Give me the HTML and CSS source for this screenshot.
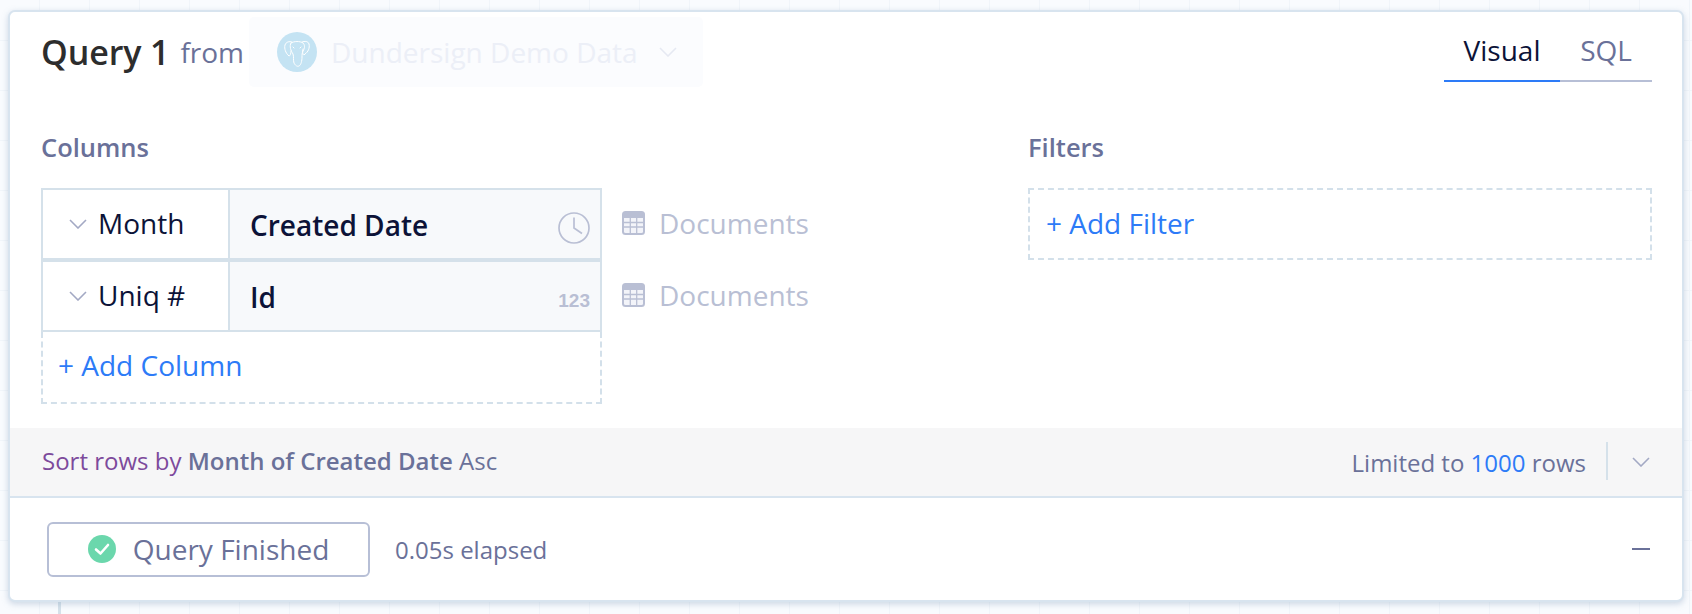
FILE: index.html
```html
<!DOCTYPE html>
<html lang="en">
<head>
<meta charset="utf-8">
<title>Query 1</title>
<link rel="stylesheet" href="styles.css">
</head>
<body>
<section class="card">
  <header class="head">
    <h1 class="title">Query 1</h1>
    <span class="from">from</span>
    <div class="source-select">
      <span class="db-icon">
        <svg viewBox="0 0 40 40" width="40" height="40" fill="none" stroke="#fff" stroke-width="1" stroke-linecap="round" stroke-linejoin="round">
          <path d="M15 10c-3-1-6 0-7 3-1 4 1 8 3 10l1 1c1 0 2-2 2-5"/>
          <path d="M25 10c3-1 6-1 7 2 1 4-1 8-4 10l-1 1c-1 0-2-3-1-6"/>
          <path d="M14 11c3-2 9-2 12 0 2 2 2 5 0 8-1 2-1 4-1 6 0 4-1 8-3 9-2 1-4-1-5-3-1-3 0-6-1-9-2-3-4-8-2-11z"/>
          <path d="M16 15l1 1M24 15l-1 1"/>
        </svg>
      </span>
      <span class="source-name">Dundersign Demo Data</span>
      <svg class="chev-faint" viewBox="0 0 18 10" width="18" height="10"><path d="M1 1l8 8 8-8" fill="none" stroke="#e6e9f2" stroke-width="1.6"/></svg>
    </div>
    <nav class="tabs">
      <a class="tab tab-on">Visual</a>
      <a class="tab">SQL</a>
    </nav>
  </header>

  <div class="builder">
    <div class="columns">
      <h2 class="label">Columns</h2>
      <div class="row">
        <div class="cells">
          <div class="agg">
            <svg class="chev" viewBox="0 0 18 10" width="18" height="10"><path d="M1 1l8 8 8-8" fill="none" stroke="#a3a9c4" stroke-width="1.6"/></svg>
            <span>Month</span>
          </div>
          <div class="field">
            <b>Created Date</b>
            <svg class="clock" viewBox="0 0 32 32" width="32" height="32" fill="none" stroke="#b9bfd4" stroke-width="1.7"><circle cx="16" cy="16" r="15"/><path d="M16 5.5V16l8 5.5"/></svg>
          </div>
        </div>
        <div class="table-ref">
          <svg viewBox="0 0 23 24" width="23" height="24"><use href="#tbl"/></svg>
          <span>Documents</span>
        </div>
      </div>
      <div class="row">
        <div class="cells">
          <div class="agg">
            <svg class="chev" viewBox="0 0 18 10" width="18" height="10"><path d="M1 1l8 8 8-8" fill="none" stroke="#a3a9c4" stroke-width="1.6"/></svg>
            <span>Uniq #</span>
          </div>
          <div class="field">
            <b>Id</b>
            <span class="num">123</span>
          </div>
        </div>
        <div class="table-ref">
          <svg viewBox="0 0 23 24" width="23" height="24"><use href="#tbl"/></svg>
          <span>Documents</span>
        </div>
      </div>
      <a class="add add-column">+ Add Column</a>
    </div>
    <div class="filters">
      <h2 class="label">Filters</h2>
      <a class="add add-filter">+ Add Filter</a>
    </div>
  </div>

  <div class="sortbar">
    <div class="sort-text"><span class="purple">Sort rows by</span> <b>Month of Created Date</b> Asc</div>
    <div class="limit">Limited to <span class="blue">1000</span> rows</div>
    <span class="divider"></span>
    <svg class="chev-end" viewBox="0 0 18 10" width="18" height="10"><path d="M1 1l8 8 8-8" fill="none" stroke="#a3a9c4" stroke-width="1.6"/></svg>
  </div>

  <footer class="foot">
    <div class="status">
      <svg viewBox="0 0 28 28" width="28" height="28"><circle cx="14" cy="14" r="14" fill="#6bd7ac"/><path d="M8 14.5l4.5 4L20 10" fill="none" stroke="#fff" stroke-width="2.6" stroke-linecap="round" stroke-linejoin="round"/></svg>
      <span>Query Finished</span>
    </div>
    <span class="elapsed">0.05s elapsed</span>
    <span class="minus"></span>
  </footer>
</section>
<div class="connector"></div>

<svg class="defs" width="0" height="0">
  <symbol id="tbl" viewBox="0 0 23 24">
    <rect width="23" height="24" rx="3.5" fill="#b9bfd4"/>
    <path d="M2 7h19v13.5a1.5 1.5 0 0 1-1.500 1.500h-16A1.500 1.500 0 0 1 2 20.500z" fill="#f3f4f9"/>
    <path d="M2 11.500h19M2 16h19M8.300 7v15M14.700 7v15" stroke="#b9bfd4" stroke-width="1.300"/>
  </symbol>
</svg>
</body>
</html>
```

FILE: styles.css
```css
* { box-sizing: border-box; }
html, body { margin: 0; height: 614px; overflow: hidden; }
body {
  padding: 10px 8px 0;
  font-family: "Open Sans", "Noto Sans", sans-serif;
  color: #6a7199;
  background-color: #f9fbfe;
  background-image:
    linear-gradient(to right, #f1f5fa 1px, transparent 1px),
    linear-gradient(to bottom, #f1f5fa 1px, transparent 1px);
  background-size: 50px 50px;
  background-position: 39px 40px;
}
.defs { position: absolute; }

.card {
  height: 592px;
  background: #fff;
  border: 2px solid #d8e4ef;
  border-radius: 7px;
  box-shadow: 0 2px 6px rgba(120, 150, 180, .35);
  display: flex;
  flex-direction: column;
  position: relative;
  z-index: 1;
}

.head {
  display: flex;
  align-items: center;
  height: 70px;
  margin-top: 5px;
  padding: 0 30px 0 31px;
}
.title {
  margin: 0;
  font-size: 34px;
  font-weight: 600;
  color: #2d2d2d;
  letter-spacing: -.1px;
}
.from { margin-left: 11px; font-size: 28px; }
.source-select {
  display: flex;
  align-items: center;
  width: 454px;
  height: 70px;
  margin-left: 5px;
  padding-left: 28px;
  background: #fbfcfe;
  border-radius: 5px;
}
.db-icon {
  width: 40px;
  height: 40px;
  border-radius: 50%;
  background: #c4e3f3;
  flex: none;
}
.source-name { margin-left: 14px; font-size: 28px; color: #eceff7; white-space: nowrap; }
.chev-faint { margin-left: 21px; }

.tabs { display: flex; margin-left: auto; align-self: flex-start; border-bottom: 2px solid #b7bfd6; height: 65px; }
.tab {
  display: flex;
  align-items: center;
  justify-content: center;
  height: 65px;
  padding-top: 3px;
  font-size: 28px;
  margin-bottom: -2px;
  border-bottom: 2px solid transparent;
}
.tab:first-child { width: 116px; }
.tab:last-child { width: 92px; }
.tab-on { color: #0c1338; border-bottom-color: #2d7bf7; }

.builder { display: flex; padding: 0 30px 0 31px; margin-top: 44px; }
.columns { width: 987px; flex: none; }
.filters { flex: 1; }
.label {
  margin: 0 0 25px;
  height: 32px;
  font-size: 25.5px;
  line-height: 32px;
  font-weight: 600;
  color: #6a7199;
}

.row { display: flex; align-items: center; height: 72px; }
.cells {
  display: flex;
  width: 561px;
  height: 72px;
  border: 2px solid #d5e1ea;
}
.agg {
  display: flex;
  align-items: center;
  width: 187px;
  padding-left: 26px;
  border-right: 2px solid #d5e1ea;
  font-size: 28px;
  color: #0c1338;
  padding-bottom: 3px;
}
.chev { margin-right: 11px; margin-top: 3px; }
.field {
  flex: 1;
  display: flex;
  align-items: center;
  justify-content: space-between;
  padding: 0 10px 0 20px;
  background: #f7f9fb;
  font-size: 28px;
  color: #0c1338;
}
.field b { font-weight: 600; margin-top: 2px; }
.clock { margin-top: 8px; }
.num {
  font-family: "Liberation Sans", Arial, sans-serif;
  font-size: 19px;
  font-weight: 700;
  color: #b9bfd4;
  margin-top: 10px;
}
.table-ref {
  display: flex;
  align-items: center;
  gap: 14px;
  margin-left: 20px;
  padding-bottom: 2px;
  font-size: 28px;
  color: #b9bfd4;
}

.add { display: flex; align-items: center; font-size: 28px; color: #2d7bf7; }
.add-column {
  width: 561px;
  height: 72px;
  padding: 0 0 4px 15px;
  border: 2px dashed #d3e0ea;
  border-top: 0;
}
.add-filter {
  height: 72px;
  padding: 0 0 2px 16px;
  border: 2px dashed #d3e0ea;
}

.sortbar {
  display: flex;
  align-items: center;
  height: 70px;
  margin-top: 24px;
  padding: 0 32px 0 32px;
  background: #f6f6f7;
  border-bottom: 2px solid #d8e4ef;
  font-size: 24px;
}
.sort-text { flex: 1; padding-bottom: 3px; }
.sort-text b { font-weight: 600; }
.purple { color: #7d4a9c; }
.blue { color: #2d7bf7; }
.divider { width: 2px; height: 38px; margin: 0 24px 2px 20px; background: #d5e1ea; }
.chev-end { flex: none; }

.foot { flex: 1; display: flex; align-items: center; padding: 0 32px 0 37px; }
.status {
  display: flex;
  align-items: center;
  justify-content: center;
  gap: 17px;
  width: 323px;
  height: 55px;
  border: 2px solid #b7bfd6;
  border-radius: 6px;
  font-size: 28px;
}
.elapsed { margin-left: 25px; font-size: 24px; }
.minus { margin-left: auto; width: 18px; height: 2px; background: #6a7199; }

.connector { width: 3px; height: 14px; margin-left: 50px; background: #d5e1ea; }
```
